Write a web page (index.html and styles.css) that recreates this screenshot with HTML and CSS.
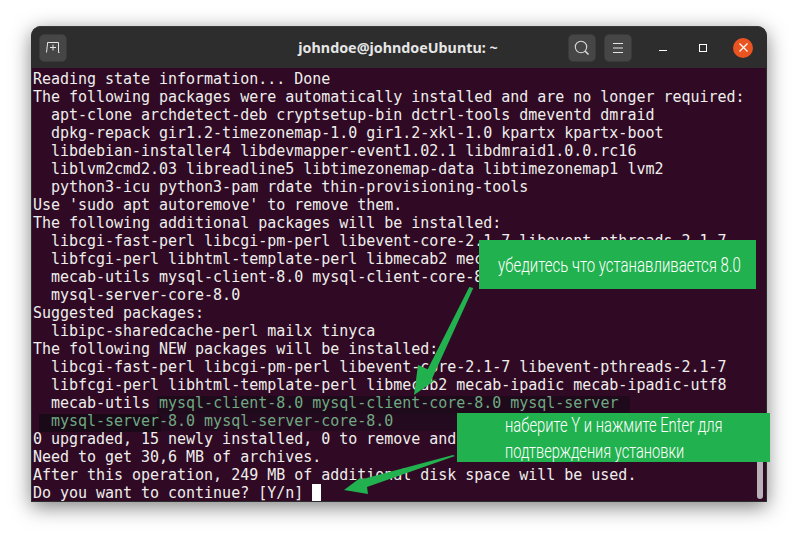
FILE: index.html
```html
<!DOCTYPE html>
<html lang="ru">
<head>
<meta charset="utf-8">
<title>johndoe@johndoeUbuntu: ~</title>
<link rel="stylesheet" href="styles.css">
</head>
<body>
<div class="window">
  <header class="titlebar">
    <button class="tb-btn" aria-label="New tab">
      <svg width="14" height="11" viewBox="0 0 14 11"><path d="M0.500 10.500L1.500 2V0.500h11V10.500h1M4 5.500h6M7 2.500v6" fill="none" stroke="#e4e4e4" stroke-width="1"/></svg>
    </button>
    <div class="title">johndoe@johndoeUbuntu: ~</div>
    <div class="controls">
      <button class="tb-btn" aria-label="Search">
        <svg width="16" height="16" viewBox="0 0 16 16"><circle cx="7" cy="7" r="5.700" fill="none" stroke="#d8d8d8" stroke-width="1.100"/><path d="M11 11l3.500 3.500" stroke="#d8d8d8" stroke-width="1.600"/></svg>
      </button>
      <button class="tb-btn" aria-label="Menu">
        <svg width="10" height="10" viewBox="0 0 10 10"><path d="M0 .500h10M0 5h10M0 9.500h10" stroke="#e4e4e4" stroke-width="1"/></svg>
      </button>
      <div class="win-btns">
        <svg class="wb" width="8" height="8" viewBox="0 0 8 8"><path d="M0 6.500h8" stroke="#fff" stroke-width="1"/></svg>
        <svg class="wb" width="8" height="8" viewBox="0 0 8 8"><rect x=".500" y=".500" width="7" height="7" fill="none" stroke="#fff" stroke-width="1"/></svg>
        <div class="close"><svg width="9" height="9" viewBox="0 0 9 9"><path d="M.500 .500l8 8M8.500 .500l-8 8" stroke="#fff" stroke-width="1.200"/></svg></div>
      </div>
    </div>
  </header>
  <main class="terminal">
    <div class="band band-a"></div>
    <div class="band band-b"></div>
    <div class="band band-c"></div>
<pre class="term-text">Reading state information... Done
The following packages were automatically installed and are no longer required:
  apt-clone archdetect-deb cryptsetup-bin dctrl-tools dmeventd dmraid
  dpkg-repack gir1.2-timezonemap-1.0 gir1.2-xkl-1.0 kpartx kpartx-boot
  libdebian-installer4 libdevmapper-event1.02.1 libdmraid1.0.0.rc16
  liblvm2cmd2.03 libreadline5 libtimezonemap-data libtimezonemap1 lvm2
  python3-icu python3-pam rdate thin-provisioning-tools
Use 'sudo apt autoremove' to remove them.
The following additional packages will be installed:
  libcgi-fast-perl libcgi-pm-perl libevent-core-2.1-7 libevent-pthreads-2.1-7
  libfcgi-perl libhtml-template-perl libmecab2 mecab-ipadic mecab-ipadic-utf8
  mecab-utils mysql-client-8.0 mysql-client-core-8.0 mysql-server
  mysql-server-core-8.0
Suggested packages:
  libipc-sharedcache-perl mailx tinyca
The following NEW packages will be installed:
  libcgi-fast-perl libcgi-pm-perl libevent-core-2.1-7 libevent-pthreads-2.1-7
  libfcgi-perl libhtml-template-perl libmecab2 mecab-ipadic mecab-ipadic-utf8
  mecab-utils <span class="sel">mysql-client-8.0 mysql-client-core-8.0 mysql-server</span>
  <span class="sel">mysql-server-8.0 mysql-server-core-8.0</span>
0 upgraded, 15 newly installed, 0 to remove and
Need to get 30,6 MB of archives.
After this operation, 249 MB of additional disk space will be used.
Do you want to continue? [Y/n] <span class="cursor"> </span></pre>
    <div class="scrollbar"></div>
  </main>
  <svg class="arrows" width="736" height="476" viewBox="0 0 736 476">
    <polygon points="442.300,262 400,355 405.700,353 383,369 387,339 396.700,343.300 438.300,261" fill="#22b14f"/>
    <polygon points="424,430 336,461 337,468 313,464 329,452 332,453 422,429" fill="#22b14f"/>
  </svg>
  <div class="note note-version"><span class="squeeze squeeze-a">убедитесь что устанавливается 8.0</span></div>
  <div class="note note-confirm">
    <span class="squeeze squeeze-b">наберите Y и нажмите Enter для</span>
    <span class="squeeze squeeze-c">подтверждения установки</span>
  </div>
</div>
</body>
</html>
```
FILE: styles.css
```css
* { box-sizing: border-box; }
html, body { margin: 0; padding: 0; background: #fff; }
body { width: 793px; height: 533px; overflow: hidden; padding: 26px 26px 0 31px; }
.window {
  position: relative;
  width: 736px;
  height: 476px;
  display: flex;
  flex-direction: column;
  border-radius: 10px 10px 2px 2px;
  background: #2d2d2d;
  box-shadow: 0 5px 20px rgba(0,0,0,.5);
}
.titlebar {
  height: 42px;
  flex: none;
  display: flex;
  align-items: center;
  padding: 0 14px 0 8px;
  background: #2d2d2d;
  border-top: 1px solid #3a3a3a;
  border-radius: 10px 10px 0 0;
  position: relative;
}
.tb-btn {
  width: 28px;
  height: 28px;
  padding: 0;
  display: flex;
  align-items: center;
  justify-content: center;
  background: #464646;
  border: 1px solid #3a3a3a;
  border-radius: 5px;
}
.title {
  position: absolute;
  left: 0;
  right: 2px;
  text-align: center;
  color: #e6e6e6;
  font: bold 14.300px "Noto Sans", "Open Sans", sans-serif;
  pointer-events: none;
}
.controls { margin-left: auto; display: flex; align-items: center; gap: 8px; }
.win-btns { display: flex; align-items: center; margin-left: 19px; gap: 32px; }
.wb { display: block; }
.close {
  width: 20px;
  height: 20px;
  margin-left: -6px;
  border-radius: 50%;
  background: #e95420;
  display: flex;
  align-items: center;
  justify-content: center;
}
.terminal {
  flex: 1;
  position: relative;
  background: #300a24;
  padding: 2px 1px 0 1px;
  border: 1px solid #2d2d2d;
  border-top: 0;
  overflow: hidden;
}
.term-text {
  position: relative;
  margin: 0;
  color: #eeeeec;
  font: 15px/18px "DejaVu Sans Mono", monospace;
  letter-spacing: -0.025px;
}
.sel { color: #6fa882; }
.cursor { background: #fff; }
.band { position: absolute; }
.band-a { left: 125px; top: 328px; width: 473px; height: 18px; background: #1e0a1a; }
.band-b { left: 7px; top: 346px; width: 122px; height: 18px; background: #1a0a17; }
.band-c { left: 129px; top: 346px; width: 300px; height: 17px; background: #240a1e; }
.scrollbar {
  position: absolute;
  right: 3px;
  bottom: 2px;
  width: 6px;
  height: 44px;
  background: #b9b3b7;
  border-radius: 3px;
}
.arrows { position: absolute; left: 0; top: 0; pointer-events: none; }
.note {
  position: absolute;
  background: #22b14f;
  color: #fff;
  font: 300 20px/26px "Roboto", sans-serif;
}
.squeeze {
  display: block;
  white-space: nowrap;
  transform-origin: left center;
}
.squeeze-a { transform: scaleX(.75); }
.squeeze-b { transform: scaleX(.74); }
.squeeze-c { transform: scaleX(.73); }
.note-version { left: 448px; top: 214px; width: 277px; height: 49px; padding: 12px 0 0 19px; }
.note-confirm { left: 426px; top: 387px; width: 313px; height: 49px; padding: 0 0 0 48px; line-height: 25.500px; }
```
